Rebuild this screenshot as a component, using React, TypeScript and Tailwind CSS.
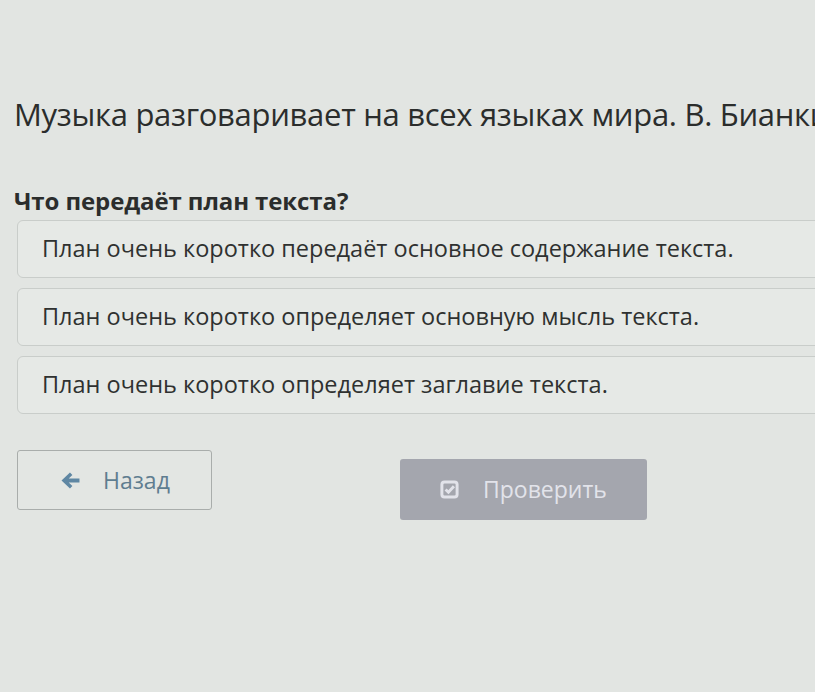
import React from "react";

export default function App() {
  const options = [
    "План очень коротко передаёт основное содержание текста.",
    "План очень коротко определяет основную мысль текста.",
    "План очень коротко определяет заглавие текста.",
  ];
  return (
    <div
      className="w-[815px] h-[692px] overflow-hidden bg-[#e2e5e2] text-[#2b2d2c]"
      style={{ fontFamily: '"Open Sans", "Noto Sans", sans-serif' }}
    >
      <div className="pt-[94px] pl-[14px]">
        <h1 className="whitespace-nowrap text-[31px] leading-[40px] font-normal tracking-[-0.3px]">
          Музыка разговаривает на всех языках мира. В. Бианки
        </h1>
        <h2 className="mt-[53px] whitespace-nowrap text-[24px] leading-[28px] font-bold tracking-[-0.1px]">
          Что передаёт план текста?
        </h2>
        <div className="mt-[5px] ml-[3px] flex flex-col gap-[10px] w-[830px]">
          {options.map((o) => (
            <div
              key={o}
              className="h-[58px] flex items-center pl-[24px] rounded-md border border-[#c9cdca] bg-[#e6e9e6] text-[23.5px] text-[#2f3130] whitespace-nowrap"
            >
              {o}
            </div>
          ))}
        </div>
        <div className="mt-[36px] ml-[3px] flex items-start">
          <button className="w-[195px] h-[60px] flex items-center rounded-[3px] border border-[#a9adab] bg-[#e3e6e3] text-[23px] text-[#5f7d90]">
            <svg className="ml-[43px]" width="19" height="17" viewBox="0 0 18 16" fill="#5f87a3">
              <path d="M8.5 0.5 L0.5 8 L8.5 15.5 L10.8 13.2 L7.3 9.8 L17.5 9.8 L17.5 6.2 L7.3 6.2 L10.8 2.8 Z" />
            </svg>
            <span className="ml-[23px]">Назад</span>
          </button>
          <button className="ml-[188px] mt-[9px] w-[247px] h-[61px] flex items-center rounded-[3px] bg-[#a4a6ae] text-[23px] text-[#e2e3ea]">
            <svg className="ml-[40px]" width="19" height="19" viewBox="0 0 18 18" fill="none" stroke="#e2e3ea" strokeWidth="2.8">
              <rect x="1.8" y="1.8" width="14.4" height="14.4" rx="2.5" />
              <path d="M5.3 9 L8 11.6 L13.2 6" />
            </svg>
            <span className="ml-[24px]">Проверить</span>
          </button>
        </div>
      </div>
    </div>
  );
}
